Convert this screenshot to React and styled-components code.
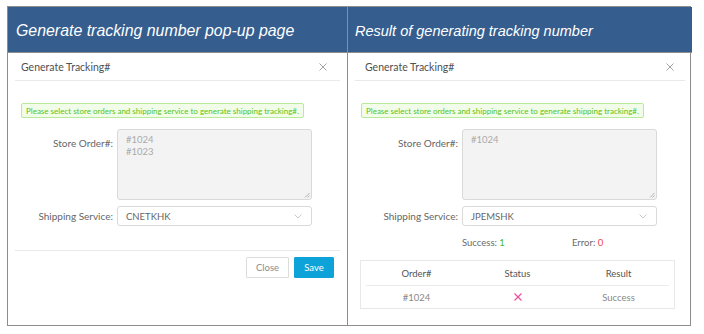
import styled, { createGlobalStyle } from "styled-components";

const GlobalStyle = createGlobalStyle`
  html, body {
    margin: 0;
    padding: 0;
    background: #ffffff;
  }
  body {
    font-family: Lato, "Open Sans", sans-serif;
  }
`;

const Page = styled.div`
  padding: 6px 0 0 7px;
`;

const Sheet = styled.div`
  display: grid;
  grid-template-columns: 340px 344px;
  grid-template-rows: 46px 272px;
  width: 684px;
  border: 1.5px solid #8d8d8d;
  box-sizing: border-box;
`;

const HeadCell = styled.div`
  background: #355d8e;
  color: #ffffff;
  font-family: "Liberation Sans", Arial, sans-serif;
  font-style: italic;
  font-size: ${(p) => p.$size}px;
  display: flex;
  align-items: center;
  padding-left: ${(p) => p.$pad}px;
  padding-top: 2px;
  border-bottom: 1.5px solid #8d8d8d;
  border-right: ${(p) => (p.$divider ? "1.5px solid #8d8d8d" : "none")};
`;

const BodyCell = styled.div`
  padding: 0 7px;
  border-right: ${(p) => (p.$divider ? "1.5px solid #8d8d8d" : "none")};
`;

const Modal = styled.div`
  display: flex;
  flex-direction: column;
`;

const ModalHead = styled.div`
  height: 27px;
  display: flex;
  align-items: center;
  justify-content: space-between;
  padding: 0 ${(p) => p.$right}px 0 ${(p) => p.$left}px;
  border-bottom: 1px solid #e9e9e9;
`;

const ModalTitle = styled.span`
  font-size: 10.5px;
  color: #505050;
`;

const CloseIcon = () => (
  <svg width="8" height="8" viewBox="0 0 8 8">
    <path d="M0.5 0.5 L7.5 7.5 M7.5 0.5 L0.5 7.5" stroke="#9a9a9a" strokeWidth="0.9" />
  </svg>
);

const ModalBody = styled.div`
  padding: 22px 8px 0 6px;
  display: flex;
  flex-direction: column;
`;

const Alert = styled.div`
  align-self: flex-start;
  height: 15px;
  box-sizing: border-box;
  padding: 0 4px;
  display: flex;
  align-items: center;
  background: #f2fde9;
  border: 1px solid #b9e99a;
  border-radius: 2px;
  color: #52c41a;
  font-size: 8px;
  white-space: nowrap;
`;

const FormRow = styled.div`
  display: flex;
  align-items: ${(p) => (p.$top ? "flex-start" : "center")};
  margin-top: ${(p) => p.$gap}px;
`;

const Label = styled.label`
  width: ${(p) => p.$w}px;
  text-align: right;
  font-size: 10px;
  color: #666666;
  padding-top: ${(p) => (p.$top ? 8 : 0)}px;
  margin-right: 4px;
  flex-shrink: 0;
`;

const OrderBox = styled.div`
  position: relative;
  width: 195px;
  height: 71px;
  box-sizing: border-box;
  background: #f3f3f3;
  border: 1px solid #d9d9d9;
  border-radius: 3px;
  padding: 4px 8px;
  font-size: 9.5px;
  line-height: 12px;
  color: #aaaaaa;
`;

const Resize = styled.svg`
  position: absolute;
  right: 1px;
  bottom: 1px;
`;

const Select = styled.div`
  width: 195px;
  height: 20px;
  box-sizing: border-box;
  border: 1px solid #d9d9d9;
  border-radius: 3px;
  display: flex;
  align-items: center;
  justify-content: space-between;
  padding: 0 9px 0 8px;
  font-size: 9.5px;
  color: #666666;
`;

const Chevron = () => (
  <svg width="8" height="5" viewBox="0 0 8 5">
    <path d="M0.5 0.5 L4 4 L7.5 0.5" stroke="#bdbdbd" strokeWidth="0.8" fill="none" />
  </svg>
);

const Footer = styled.div`
  margin-top: 24px;
  border-top: 1px solid #e9e9e9;
  padding: 6px 6px 0 0;
  display: flex;
  justify-content: flex-end;
  gap: 5px;
`;

const Button = styled.button`
  height: 21px;
  width: ${(p) => p.$w}px;
  box-sizing: border-box;
  font-family: Lato, "Open Sans", sans-serif;
  font-size: 9.5px;
  border-radius: 1px;
  border: 1px solid ${(p) => (p.$primary ? "#0ea3d8" : "#dcdcdc")};
  background: ${(p) => (p.$primary ? "#0ea3d8" : "#ffffff")};
  color: ${(p) => (p.$primary ? "#ffffff" : "#8a8a8a")};
  padding: 0;
`;

const Counts = styled.div`
  display: flex;
  margin: 11px 0 0 107px;
  font-size: 9.5px;
  color: #6a6a6a;
`;

const Count = styled.span`
  width: 110px;
  b {
    font-weight: normal;
    color: ${(p) => p.$color};
  }
`;

const Table = styled.div`
  margin: 12px 10px 0 5px;
  border: 1px solid #e8e8e8;
  padding: 0 5px;
  font-size: 9.5px;
`;

const TRow = styled.div`
  display: grid;
  grid-template-columns: 1fr 1fr 1fr;
  height: ${(p) => p.$h}px;
  align-items: center;
  text-align: center;
  color: ${(p) => (p.$head ? "#555555" : "#888888")};
  border-bottom: ${(p) => (p.$head ? "1px solid #ececec" : "none")};
`;

const PinkX = () => (
  <svg width="8" height="8" viewBox="0 0 8 8">
    <path d="M0.5 0.5 L7.5 7.5 M7.5 0.5 L0.5 7.5" stroke="#ec4f9c" strokeWidth="1.2" />
  </svg>
);

const ResizeHandle = () => (
  <Resize width="6" height="6" viewBox="0 0 6 6">
    <path d="M5.5 1 L1 5.5 M5.5 3.5 L3.5 5.5" stroke="#999" strokeWidth="0.7" />
  </Resize>
);

const App = () => {
  return (
    <Page>
      <GlobalStyle />
      <Sheet>
        <HeadCell $pad={8} $size={15.9} $divider>
          Generate tracking number pop-up page
        </HeadCell>
        <HeadCell $pad={7} $size={14.5}>
          Result of generating tracking number
        </HeadCell>

        <BodyCell $divider>
          <Modal>
            <ModalHead $left={6} $right={13}>
              <ModalTitle>Generate Tracking#</ModalTitle>
              <CloseIcon />
            </ModalHead>
            <ModalBody>
              <Alert>
                Please select store orders and shipping service to generate
                shipping tracking#.
              </Alert>
              <FormRow $top $gap={11}>
                <Label $w={92} $top>
                  Store Order#:
                </Label>
                <OrderBox>
                  #1024
                  <br />
                  #1023
                  <ResizeHandle />
                </OrderBox>
              </FormRow>
              <FormRow $gap={6}>
                <Label $w={92}>Shipping Service:</Label>
                <Select>
                  CNETKHK
                  <Chevron />
                </Select>
              </FormRow>
            </ModalBody>
            <Footer>
              <Button $w={43}>Close</Button>
              <Button $w={40} $primary>
                Save
              </Button>
            </Footer>
          </Modal>
        </BodyCell>

        <BodyCell>
          <Modal>
            <ModalHead $left={10} $right={11}>
              <ModalTitle>Generate Tracking#</ModalTitle>
              <CloseIcon />
            </ModalHead>
            <ModalBody>
              <Alert>
                Please select store orders and shipping service to generate
                shipping tracking#.
              </Alert>
              <FormRow $top $gap={11}>
                <Label $w={97} $top>
                  Store Order#:
                </Label>
                <OrderBox>
                  #1024
                  <ResizeHandle />
                </OrderBox>
              </FormRow>
              <FormRow $gap={6}>
                <Label $w={97}>Shipping Service:</Label>
                <Select>
                  JPEMSHK
                  <Chevron />
                </Select>
              </FormRow>
            </ModalBody>
            <Counts>
              <Count $color="#3cbf2a">
                Success: <b>1</b>
              </Count>
              <Count $color="#f5454a">
                Error: <b>0</b>
              </Count>
            </Counts>
            <Table>
              <TRow $head $h={24}>
                <span>Order#</span>
                <span>Status</span>
                <span>Result</span>
              </TRow>
              <TRow $h={22}>
                <span>#1024</span>
                <span>
                  <PinkX />
                </span>
                <span>Success</span>
              </TRow>
            </Table>
          </Modal>
        </BodyCell>
      </Sheet>
    </Page>
  );
};

export default App;
